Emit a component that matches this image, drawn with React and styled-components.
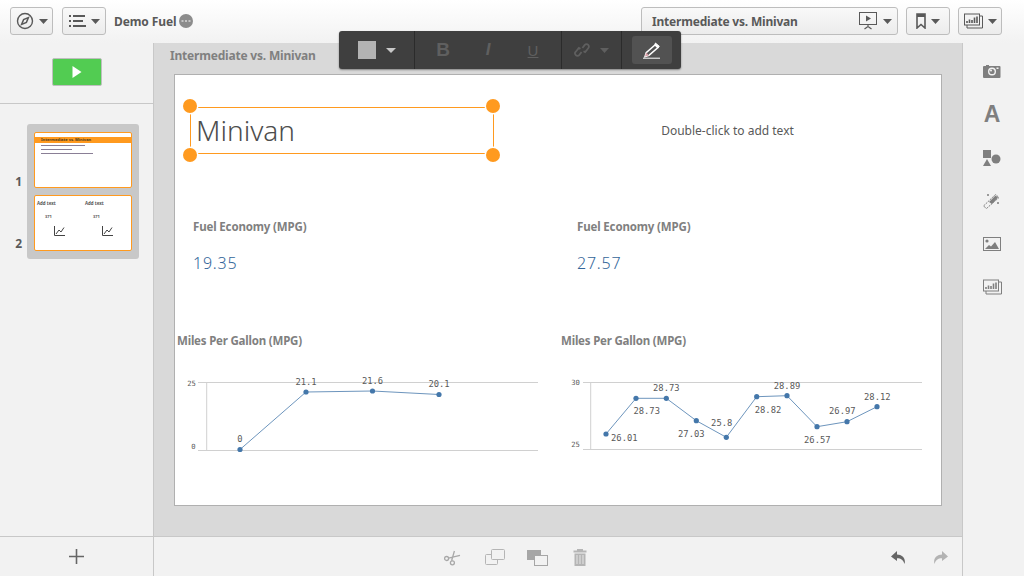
import React from 'react'
import styled, { createGlobalStyle } from 'styled-components'

const colores = {
  panel: '#f2f2f2',
  borde: '#c8c8c8',
  texto: '#595959',
  gris: '#808080',
  naranja: '#ff9a1f',
  azul: '#4477aa',
}

const FUENTE = '"Noto Sans", "Open Sans", sans-serif'

const chart1 = {
  view: '175 350 384 120',
  axisLeft: 198,
  axisRight: 538,
  vertical: 206.7,
  top: 382.5,
  bottom: 450.5,
  ticks: [{ t: '25', x: 191.5, y: 385.5 }, { t: '0', x: 193.5, y: 448.5 }],
  points: [[240, 449.5], [306, 392], [372.5, 391], [439, 394.5]],
  labels: [
    { t: '0', x: 240, y: 442 },
    { t: '21.1', x: 306, y: 385 },
    { t: '21.6', x: 372.5, y: 384 },
    { t: '20.1', x: 439, y: 387 },
  ],
}

const chart2 = {
  view: '559 350 384 120',
  axisLeft: 583,
  axisRight: 922,
  vertical: 590.7,
  top: 382.5,
  bottom: 449.5,
  ticks: [{ t: '30', x: 575.5, y: 384.5 }, { t: '25', x: 575.5, y: 447 }],
  points: [[606, 434], [636, 398.3], [666.3, 398.3], [696.3, 420.7], [726.3, 437.3], [756.7, 396.7], [787, 395.7], [817, 426.7], [847, 421.7], [877, 406.7]],
  labels: [
    { t: '26.01', x: 624.3, y: 441 },
    { t: '28.73', x: 646.7, y: 414 },
    { t: '28.73', x: 666.3, y: 391 },
    { t: '27.03', x: 691.3, y: 437 },
    { t: '25.8', x: 721.7, y: 426 },
    { t: '28.82', x: 768, y: 413 },
    { t: '28.89', x: 787, y: 389 },
    { t: '26.57', x: 817.3, y: 443 },
    { t: '26.97', x: 842.3, y: 414 },
    { t: '28.12', x: 877.3, y: 400 },
  ],
}

const LineChart = ({ data }) => (
  <ChartSvg viewBox={data.view}>
    <g stroke="#d0d0d0" strokeWidth="1">
      <line x1={data.axisLeft} x2={data.axisRight} y1={data.top} y2={data.top} />
      <line x1={data.axisLeft} x2={data.axisRight} y1={data.bottom} y2={data.bottom} />
      <line x1={data.vertical} x2={data.vertical} y1={data.top} y2={data.bottom} />
    </g>
    <polyline points={data.points.map(p => p.join(',')).join(' ')} fill="none" stroke="#6d95bd" strokeWidth="1" />
    {data.points.map((p, i) => (
      <circle key={i} cx={p[0]} cy={p[1]} r="2.6" fill={colores.azul} />
    ))}
    {data.ticks.map((l, i) => (
      <TickText key={i} x={l.x} y={l.y} textAnchor="middle">{l.t}</TickText>
    ))}
    {data.labels.map((l, i) => (
      <PointText key={i} x={l.x} y={l.y} textAnchor="middle">{l.t}</PointText>
    ))}
  </ChartSvg>
)

const Caret = ({ color = '#595959', w = 9 }) => (
  <svg width={w} height="5" viewBox="0 0 9 5" preserveAspectRatio="none"><path d="M0 0h9L4.5 5z" fill={color} /></svg>
)

const IconCompass = () => (
  <svg width="18" height="18" viewBox="0 0 18 18" fill="none">
    <circle cx="9" cy="9" r="7.5" stroke="#595959" strokeWidth="1.4" />
    <path d="M12.4 5.6 10.4 10.4 5.6 12.4 7.6 7.6z" stroke="#595959" strokeWidth="1.5" />
  </svg>
)

const IconList = () => (
  <svg width="17" height="12" viewBox="0 0 17 12" fill="#595959">
    <rect x="0" y="0" width="2" height="2" /><rect x="4" y="0" width="12" height="2" />
    <rect x="0" y="5" width="2" height="2" /><rect x="4" y="5" width="10" height="2" />
    <rect x="0" y="10" width="2" height="2" /><rect x="4" y="10" width="13" height="2" />
  </svg>
)

const IconBadge = () => (
  <svg width="14" height="14" viewBox="0 0 14 14">
    <circle cx="7" cy="7" r="7" fill="#8c8c8c" />
    <path d="M2.5 7h2M6 7h2M9.5 7h2" stroke="#fff" strokeWidth="1" />
  </svg>
)

const IconStory = () => (
  <svg width="18" height="20" viewBox="0 0 18 20" fill="none">
    <rect x="0.5" y="1.5" width="17" height="12" stroke="#595959" />
    <path d="M7 4.5v6l5-3z" fill="#595959" />
    <path d="M9 14v2M5.5 18 9 15.5 12.5 18" stroke="#595959" strokeWidth="1.2" />
  </svg>
)

const IconBookmark = () => (
  <svg width="10" height="16" viewBox="0 0 10 16" fill="none">
    <path d="M1 1h8v14L5 11.5 1 15z" stroke="#595959" strokeWidth="1.6" />
    <rect x="1" y="1" width="8" height="3" fill="#595959" />
  </svg>
)

const IconSnapshots = ({ color = '#595959' }) => (
  <svg width="19" height="16" viewBox="0 0 19 16" fill="none">
    <path d="M15.5 3H18.5V15H3V12" stroke={color} />
    <rect x="0.5" y="1" width="15" height="11" fill="#f2f2f2" stroke={color} />
    <path d="M3 10V8M5.5 10V6.5M8 10V7M10.5 10V4.5M13 10V3.5" stroke={color} strokeWidth="1.6" />
  </svg>
)

const IconPlay = () => (
  <svg width="10" height="12" viewBox="0 0 10 12"><path d="M0.5 0 9.5 6 0.5 12z" fill="#fff" /></svg>
)

const IconLink = () => (
  <svg width="16" height="16" viewBox="0 0 16 16" fill="none" stroke="#5f5f5f" strokeWidth="1.8">
    <path d="M6.5 6.8 4.8 5.9 1.8 9.7a2.2 2.2 0 0 0 3.4 3.4L7.6 10" />
    <path d="M9.5 9.2 11.2 10.1 14.2 6.3a2.2 2.2 0 0 0-3.4-3.4L8.4 6" />
  </svg>
)

const IconPencil = () => (
  <svg width="18" height="17" viewBox="0 0 18 17" fill="none">
    <path d="M12 3 15 5.6 6 13.4 2 14.6 3.2 10.6z" stroke="#fff" strokeWidth="1.5" />
    <path d="M12.4 1 16.4 4.4 15 5.6 12 3z" fill="#fff" stroke="#fff" />
    <path d="M2 14.6 3.2 10.6 6 13.4z" fill="#d9a0a8" />
    <path d="M0 16.2h17" stroke="#fff" />
  </svg>
)

const IconCamera = () => (
  <svg width="18" height="15" viewBox="0 0 18 15">
    <path d="M1 2h2V1h3v1h10.5a1 1 0 0 1 1 1v10a1 1 0 0 1-1 1H1a1 1 0 0 1-1-1V3a1 1 0 0 1 1-1z" fill="#7f7f7f" />
    <circle cx="9" cy="7.5" r="4" fill="#f2f2f2" />
    <circle cx="9" cy="7.5" r="2.6" fill="#7f7f7f" />
    <circle cx="8" cy="6.5" r="1" fill="#f2f2f2" />
    <rect x="13.5" y="3.5" width="2" height="1.5" fill="#f2f2f2" />
  </svg>
)

const IconShapes = () => (
  <svg width="18" height="16" viewBox="0 0 18 16" fill="#7f7f7f">
    <rect x="0" y="0" width="8" height="8" />
    <circle cx="13" cy="9" r="4.5" />
    <path d="M0 16 4 9 8 16z" />
  </svg>
)

const IconWand = () => (
  <svg width="18" height="16" viewBox="0 0 18 16" fill="none">
    <path d="M0.5 13 12.5 1.5 16 4.5 3.5 15.5z" stroke="#7f7f7f" strokeDasharray="2 1" />
    <path d="M6 9 12.5 2.5 15 4.5 9 11z" fill="#7f7f7f" />
    <path d="M4 2h2M5 1v2M14 10h2M15 9v2" stroke="#7f7f7f" />
  </svg>
)

const IconImage = () => (
  <svg width="18" height="14" viewBox="0 0 18 14" fill="none">
    <rect x="0.5" y="0.5" width="17" height="13" stroke="#7f7f7f" />
    <circle cx="4" cy="4" r="1.6" fill="#7f7f7f" />
    <path d="M2 12 6 8l2 1.5L12 5l4 7z" fill="#7f7f7f" />
  </svg>
)

const IconPlus = () => (
  <svg width="15" height="15" viewBox="0 0 15 15"><path d="M7.5 0v15M0 7.5h15" stroke="#666" strokeWidth="1.6" /></svg>
)

const IconScissors = () => (
  <svg width="17" height="16" viewBox="0 0 17 16" fill="none" stroke="#a8a8a8" strokeWidth="1.3">
    <circle cx="2.6" cy="8.5" r="2" />
    <circle cx="8.4" cy="12.8" r="2" />
    <path d="M4.5 8.2 16 5.4M7.6 10.8 10.4 1" />
  </svg>
)

const IconCopy = () => (
  <svg width="20" height="17" viewBox="0 0 20 17" fill="none" stroke="#b5b5b5">
    <rect x="6.5" y="0.5" width="13" height="10" rx="1" />
    <path d="M6.5 5.5h-5a1 1 0 0 0-1 1v8a1 1 0 0 0 1 1h10a1 1 0 0 0 1-1v-4" />
  </svg>
)

const IconPaste = () => (
  <svg width="21" height="16" viewBox="0 0 21 16">
    <rect x="0" y="0" width="14" height="10" fill="#a6a6a6" />
    <rect x="7.5" y="5.5" width="13" height="10" fill="#f2f2f2" stroke="#a6a6a6" />
  </svg>
)

const IconTrash = () => (
  <svg width="14" height="17" viewBox="0 0 14 17" fill="#b5b5b5">
    <rect x="0.5" y="1.5" width="13" height="2" />
    <rect x="4" y="0" width="6" height="2" />
    <path d="M1.5 4.5h11V17h-11z" />
    <path d="M4 6v9M7 6v9M10 6v9" stroke="#e6e6e6" />
  </svg>
)

const IconUndo = ({ color = '#666', flip }) => (
  <ArrowSvg $flip={flip} width="15" height="14" viewBox="0 0 15 14">
    <path d="M6 0 0 5.5 6 10V7.2c4 0 6.5 1.8 7.5 5.8 1.6-5.5-2-9.6-7.5-9.6z" fill={color} />
  </ArrowSvg>
)

const ThumbChartIcon = () => (
  <svg width="11" height="10" viewBox="0 0 11 10" fill="none" stroke="#444">
    <path d="M0.5 0v9.5H11" />
    <path d="M2 8 5 4l2 2 3-4.5" />
  </svg>
)

export default function App() {
  return (
    <>
      <GlobalStyle />
      <Page>
        <TopBar>
          <ToolButton $w={43}><IconCompass /><Caret /></ToolButton>
          <ToolButton $w={44}><IconList /><Caret /></ToolButton>
          <AppName>Demo Fuel</AppName>
          <IconBadge />
          <Spacer />
          <TopRight>
            <SheetSelect>
              <span>Intermediate vs. Minivan</span>
              <SelectIcons><IconStory /><Caret /></SelectIcons>
            </SheetSelect>
            <ToolButton $w={44}><IconBookmark /><Caret /></ToolButton>
            <ToolButton $w={44}><IconSnapshots /><Caret /></ToolButton>
          </TopRight>
        </TopBar>

        <LeftPanel>
          <PlayArea>
            <PlayButton><IconPlay /></PlayButton>
          </PlayArea>
          <SlidesRow>
            <SlideNumbers>
              <span>1</span>
              <span>2</span>
            </SlideNumbers>
            <SlideTray>
              <Thumb>
                <ThumbBand>Intermediate vs. Minivan</ThumbBand>
                <ThumbLine $w={44} />
                <ThumbLine $w={31} />
                <ThumbLine $w={52} />
              </Thumb>
              <Thumb>
                <ThumbGrid>
                  {[0, 1].map(i => (
                    <ThumbCol key={i}>
                      <ThumbText>Add text</ThumbText>
                      <ThumbValue>371</ThumbValue>
                      <ThumbChartIcon />
                    </ThumbCol>
                  ))}
                </ThumbGrid>
              </Thumb>
            </SlideTray>
          </SlidesRow>
        </LeftPanel>

        <Center>
          <SlideTitle>Intermediate vs. Minivan</SlideTitle>
          <Sheet>
            <TitleCell>
              <Selected>
                <TitleText>Minivan</TitleText>
                <Handle $top $left />
                <Handle $top />
                <Handle $left />
                <Handle />
              </Selected>
            </TitleCell>
            <HintCell>Double-click to add text</HintCell>
            <KpiCell>
              <KpiLabel>Fuel Economy (MPG)</KpiLabel>
              <KpiValue>19.35</KpiValue>
            </KpiCell>
            <KpiCell>
              <KpiLabel>Fuel Economy (MPG)</KpiLabel>
              <KpiValue>27.57</KpiValue>
            </KpiCell>
            <ChartCell>
              <ChartTitle>Miles Per Gallon (MPG)</ChartTitle>
              <LineChart data={chart1} />
            </ChartCell>
            <ChartCell>
              <ChartTitle>Miles Per Gallon (MPG)</ChartTitle>
              <LineChart data={chart2} />
            </ChartCell>
          </Sheet>
        </Center>

        <RightPanel>
          <RightSlot><IconCamera /></RightSlot>
          <RightSlot><LetterA>A</LetterA></RightSlot>
          <RightSlot><IconShapes /></RightSlot>
          <RightSlot><IconWand /></RightSlot>
          <RightSlot><IconImage /></RightSlot>
          <RightSlot><IconSnapshots color="#7f7f7f" /></RightSlot>
        </RightPanel>

        <AddCell><IconPlus /></AddCell>
        <BottomBar>
          <EditIcons>
            <IconScissors />
            <IconCopy />
            <IconPaste />
            <IconTrash />
          </EditIcons>
          <HistoryIcons>
            <IconUndo />
            <IconUndo color="#b3b3b3" flip />
          </HistoryIcons>
        </BottomBar>
        <BottomEnd />

        <FloatingBar>
          <FloatSection $w={76}><Swatch /><Caret color="#c8c8c8" w={10} /></FloatSection>
          <FloatSection $w={147} $gap={0}>
            <FormatBtn $b>B</FormatBtn>
            <FormatBtn $i>I</FormatBtn>
            <FormatBtn $u>U</FormatBtn>
          </FloatSection>
          <FloatSection $w={60}><IconLink /><Caret color="#5f5f5f" /></FloatSection>
          <FloatSection $w={59} $last><PencilBtn><IconPencil /></PencilBtn></FloatSection>
        </FloatingBar>
      </Page>
    </>
  )
}

//================================STYLES===============================
const GlobalStyle = createGlobalStyle`
  html, body {
    margin: 0;
    padding: 0;
    overflow: hidden;
    background: ${colores.panel};
    font-family: ${FUENTE};
  }
  * { box-sizing: border-box; }
`

const Page = styled.div`
  position: relative;
  width: 1024px;
  height: 576px;
  display: grid;
  grid-template-columns: 154px 808px 62px;
  grid-template-rows: 43px 493px 40px;
  background: ${colores.panel};
  color: ${colores.texto};
`

const TopBar = styled.div`
  grid-column: 1 / 4;
  display: flex;
  align-items: center;
  gap: 9px;
  padding: 0 22px 1px 10px;
  background: linear-gradient(#ffffff, ${colores.panel});
`

const TopRight = styled.div`
  display: flex;
  align-items: center;
  gap: 8px;
`

const ToolButton = styled.div`
  width: ${p => p.$w}px;
  height: 28px;
  display: flex;
  align-items: center;
  justify-content: center;
  gap: 5px;
  border: 1px solid #bdbdbd;
  border-radius: 3px;
  background: linear-gradient(#f9f9f9, #ececec);
`

const AppName = styled.div`
  margin-left: -1px;
  margin-right: -7px;
  font-size: 12px;
  font-weight: 700;
  letter-spacing: -0.1px;
`

const Spacer = styled.div`
  flex: 1;
`

const SheetSelect = styled(ToolButton)`
  width: 257px;
  justify-content: space-between;
  padding: 0 5px 0 10px;
  font-size: 12px;
  font-weight: 700;
  letter-spacing: -0.2px;
`

const SelectIcons = styled.div`
  display: flex;
  align-items: center;
  gap: 6px;
`

const LeftPanel = styled.div`
  display: flex;
  flex-direction: column;
  border-right: 1px solid ${colores.borde};
`

const PlayArea = styled.div`
  height: 61px;
  display: flex;
  justify-content: center;
  padding: 15px 0 0 1px;
  border-bottom: 1px solid ${colores.borde};
`

const PlayButton = styled.div`
  width: 50px;
  height: 28px;
  display: flex;
  align-items: center;
  justify-content: center;
  background: #52cc52;
  border: 1px solid #bfbfbf;
  border-radius: 2px;
`

const SlidesRow = styled.div`
  display: flex;
  padding-top: 20px;
`

const SlideNumbers = styled.div`
  width: 27px;
  display: flex;
  flex-direction: column;
  gap: 46px;
  padding: 50px 5px 0 0;
  text-align: right;
  font-size: 12px;
  font-weight: 700;
  line-height: 16px;
`

const SlideTray = styled.div`
  width: 112px;
  height: 135px;
  display: flex;
  flex-direction: column;
  gap: 7px;
  padding: 8px 7px;
  background: #c8c8c8;
  border-radius: 3px;
`

const Thumb = styled.div`
  height: 56px;
  background: #fff;
  border: 1px solid ${colores.naranja};
  border-radius: 2px;
  overflow: hidden;
`

const ThumbBand = styled.div`
  height: 6px;
  margin: 4px 0 2px;
  padding-left: 6px;
  background: ${colores.naranja};
  color: #4a3a20;
  font-size: 4px;
  font-weight: 700;
  line-height: 6px;
  white-space: nowrap;
`

const ThumbLine = styled.div`
  width: ${p => p.$w}px;
  height: 1px;
  margin: 0 0 3px 6px;
  background: #8a7f96;
`

const ThumbGrid = styled.div`
  display: grid;
  grid-template-columns: 48px 48px;
  padding: 3px 0 0 2px;
`

const ThumbCol = styled.div`
  display: flex;
  flex-direction: column;
  padding-left: 17px;
  svg { margin-top: 6px; }
`

const ThumbText = styled.div`
  margin-left: -17px;
  height: 8px;
  font-size: 4.4px;
  font-weight: 700;
  line-height: 8px;
  color: #555;
  white-space: nowrap;
`

const ThumbValue = styled.div`
  margin: 7px 0 0 -9px;
  height: 6px;
  font-size: 4px;
  font-weight: 700;
  line-height: 6px;
  color: #555;
`

const Center = styled.div`
  padding: 0 20px 0 16px;
  background: #d9d9d9;
`

const SlideTitle = styled.div`
  height: 31px;
  padding-top: 4px;
  font-size: 12px;
  font-weight: 700;
  letter-spacing: -0.2px;
  line-height: 18px;
  color: ${colores.gris};
  white-space: nowrap;
`

const Sheet = styled.div`
  width: 768px;
  height: 432px;
  margin-left: 4px;
  display: grid;
  grid-template-columns: 384px 383px;
  grid-template-rows: 110px 149px 1fr;
  background: #fff;
  border: 1px solid #b0b0b0;
`

const TitleCell = styled.div`
  padding: 32px 0 0 15px;
`

const Selected = styled.div`
  position: relative;
  width: 304px;
  height: 47px;
  border: 1px solid ${colores.naranja};
`

const TitleText = styled.div`
  padding-left: 5px;
  font-size: 28px;
  font-weight: 300;
  line-height: 44px;
  color: #4d4d4d;
`

const Handle = styled.div`
  position: absolute;
  width: 14px;
  height: 14px;
  border-radius: 50%;
  background: ${colores.naranja};
  box-shadow: 0 0 0 1.5px #fff;
  ${p => (p.$top ? 'top: -9px;' : 'bottom: -9px;')}
  ${p => (p.$left ? 'left: -8px;' : 'right: -7px;')}
`

const HintCell = styled.div`
  padding: 47px 96px 0 50px;
  font-size: 12px;
  line-height: 18px;
  color: #595959;
  text-align: center;
  white-space: nowrap;
`

const KpiCell = styled.div`
  padding: 34px 0 0 18px;
`

const KpiLabel = styled.div`
  font-size: 11.5px;
  font-weight: 700;
  letter-spacing: -0.15px;
  line-height: 16px;
  color: ${colores.gris};
`

const KpiValue = styled.div`
  margin-top: 17px;
  font-size: 16px;
  font-weight: 300;
  letter-spacing: 0.8px;
  line-height: 22px;
  color: #33669a;
`

const ChartCell = styled.div`
  display: flex;
  flex-direction: column;
`

const ChartTitle = styled.div`
  height: 16px;
  margin-top: -1px;
  padding-left: 2px;
  font-size: 11.5px;
  font-weight: 700;
  letter-spacing: -0.2px;
  line-height: 16px;
  color: ${colores.gris};
`

const ChartSvg = styled.svg`
  display: block;
  width: 384px;
  height: 120px;
  margin-top: 1px;
`

const TickText = styled.text`
  font-family: "DejaVu Sans Mono", monospace;
  font-size: 7.2px;
  fill: #595959;
`

const PointText = styled.text`
  font-family: "DejaVu Sans Mono", monospace;
  font-size: 8.8px;
  fill: #595959;
`

const RightPanel = styled.div`
  display: flex;
  flex-direction: column;
  padding: 7px 3px 0 0;
  border-left: 1px solid ${colores.borde};
`

const RightSlot = styled.div`
  height: 43px;
  display: flex;
  align-items: center;
  justify-content: center;
`

const LetterA = styled.span`
  font-family: "Liberation Sans", sans-serif;
  font-size: 23px;
  font-weight: 700;
  line-height: 1;
  color: #7f7f7f;
`

const AddCell = styled.div`
  display: flex;
  align-items: center;
  justify-content: center;
  padding-right: 1px;
  border-top: 1px solid ${colores.borde};
  border-right: 1px solid ${colores.borde};
`

const BottomBar = styled.div`
  display: flex;
  align-items: center;
  padding: 2px 14px 0 290px;
  border-top: 1px solid ${colores.borde};
`

const EditIcons = styled.div`
  flex: 1;
  display: flex;
  align-items: center;
  gap: 24px;
  svg:nth-child(3) { margin-left: -2px; }
  svg:nth-child(4) { margin-left: 1px; }
`

const HistoryIcons = styled.div`
  display: flex;
  align-items: center;
  gap: 27px;
`

const ArrowSvg = styled.svg`
  ${p => p.$flip && 'transform: scaleX(-1);'}
`

const BottomEnd = styled.div`
  border-left: 1px solid ${colores.borde};
`

const FloatingBar = styled.div`
  position: absolute;
  left: 339px;
  top: 31px;
  width: 342px;
  height: 38px;
  display: flex;
  background: #3f3f3f;
  border-radius: 3px;
  box-shadow: 0 1px 2px rgba(0, 0, 0, 0.4);
`

const FloatSection = styled.div`
  width: ${p => p.$w}px;
  display: flex;
  align-items: center;
  justify-content: center;
  gap: ${p => (p.$gap !== undefined ? p.$gap : 10)}px;
  ${p => !p.$last && 'border-right: 1px solid #2b2b2b;'}
`

const Swatch = styled.div`
  width: 18px;
  height: 18px;
  background: #b3b3b3;
`

const FormatBtn = styled.div`
  width: 45px;
  text-align: center;
  font-family: "Liberation Sans", sans-serif;
  color: #5f5f5f;
  font-size: ${p => (p.$b ? 19 : p.$i ? 17 : 15)}px;
  font-weight: ${p => (p.$u ? 400 : 700)};
  font-style: ${p => (p.$i ? 'italic' : 'normal')};
  text-decoration: ${p => (p.$u ? 'underline' : 'none')};
`

const PencilBtn = styled.div`
  width: 40px;
  height: 28px;
  margin-left: 1px;
  display: flex;
  align-items: center;
  justify-content: center;
  background: #525252;
  border-radius: 3px;
`
